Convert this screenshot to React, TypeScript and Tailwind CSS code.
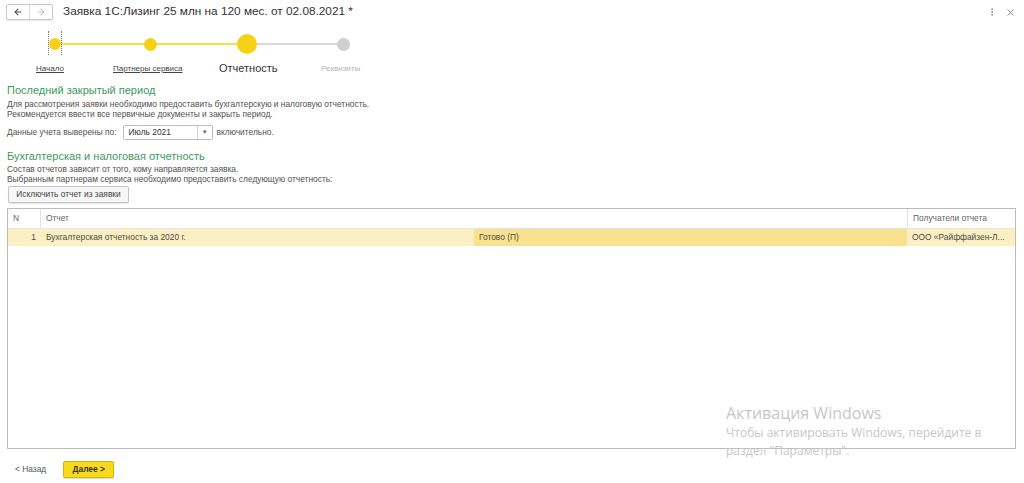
import { ArrowLeft, ArrowRight, X, MoreVertical } from 'lucide-react'

const font = { fontFamily: '"Liberation Sans", Arial, sans-serif' }

function Step({ label, state }: { label: string; state: 'done' | 'current' | 'next' }) {
  if (state === 'current') return <span className="text-[11px] text-[#333]">{label}</span>
  if (state === 'next') return <span className="text-[8px] text-[#b5b5b5]">{label}</span>
  return <span className="text-[8px] text-[#444] underline">{label}</span>
}

export default function App() {
  return (
    <div style={font} className="relative w-[1024px] h-[483px] bg-white overflow-hidden text-[#525252]">
      {/* header */}
      <div className="flex items-center h-[23px] pt-[1px] pl-[6px] pr-[8px]">
        <div className="flex h-[16px] border border-[#c8c8c8] rounded-[2px] shadow-[0_1px_1px_rgba(0,0,0,0.08)]">
          <div className="w-[23px] flex items-center justify-center border-r border-[#dcdcdc]">
            <ArrowLeft size={10} strokeWidth={2.5} className="text-[#444]" />
          </div>
          <div className="w-[22px] flex items-center justify-center">
            <ArrowRight size={10} strokeWidth={2.5} className="text-[#c4c4c4]" />
          </div>
        </div>
        <div className="ml-[10px] text-[11.8px] text-[#333]">Заявка 1С:Лизинг 25 млн на 120 мес. от 02.08.2021 *</div>
        <div className="ml-auto flex items-center gap-[8px] text-[#888]">
          <MoreVertical size={10} />
          <X size={11} />
        </div>
      </div>

      {/* stepper */}
      <div className="relative h-[59px] text-[8px] leading-none">
        <div className="absolute left-[55px] top-[20px] w-[192px] h-[2px] bg-[#f7dc4a]" />
        <div className="absolute left-[247px] top-[20px] w-[96px] h-[2px] bg-[#d8d8d8]" />
        <div className="absolute left-[48px] top-[8px] h-[24px] w-[14px] border-l border-r border-dotted border-[#777]" />
        <div className="absolute left-[49px] top-[15px] w-[12px] h-[12px] rounded-full bg-[#f7d117]" />
        <div className="absolute left-[144px] top-[15px] w-[13px] h-[13px] rounded-full bg-[#f7d117]" />
        <div className="absolute left-[237px] top-[11px] w-[20px] h-[20px] rounded-full bg-[#f7d117]" />
        <div className="absolute left-[337px] top-[15px] w-[13px] h-[13px] rounded-full bg-[#cfcfcf]" />
        <div className="absolute left-[36px] top-[42px]"><Step label="Начало" state="done" /></div>
        <div className="absolute left-[113px] top-[42px]"><Step label="Партнеры сервиса" state="done" /></div>
        <div className="absolute left-[219px] top-[40px]"><Step label="Отчетность" state="current" /></div>
        <div className="absolute left-[321px] top-[42px]"><Step label="Реквизиты" state="next" /></div>
      </div>

      <div className="px-[7px]">
        <div className="text-[11px] text-[#3d9a5e] leading-[14px] mt-[1px]">Последний закрытый период</div>
        <div className="text-[8.4px] leading-[10px] mt-[2px]">
          Для рассмотрения заявки необходимо предоставить бухгалтерскую и налоговую отчетность.
          <br />
          Рекомендуется ввести все первичные документы и закрыть период.
        </div>
        <div className="flex items-center mt-[6px] text-[8.4px]">
          <span>Данные учета выверены по:</span>
          <div className="ml-[6px] flex h-[15px] w-[90px] border border-[#bdbdbd] rounded-[2px]">
            <div className="flex-1 pl-[5px] flex items-center text-[#333]">Июль 2021</div>
            <div className="w-[15px] border-l border-[#d4d4d4] flex items-center justify-center text-[7px] text-[#666]">▾</div>
          </div>
          <span className="ml-[4px]">включительно.</span>
        </div>

        <div className="text-[11px] text-[#3d9a5e] leading-[14px] mt-[9px]">Бухгалтерская и налоговая отчетность</div>
        <div className="text-[8.4px] leading-[9.5px] mt-[2px]">
          Состав отчетов зависит от того, кому направляется заявка.
          <br />
          Выбранным партнерам сервиса необходимо предоставить следующую отчетность:
        </div>
        <button className="block mt-[2px] h-[17px] w-[121px] ml-[1px] border border-[#c3c3c3] rounded-[2px] bg-[#f7f7f7] text-[8.4px] leading-none text-[#444] shadow-[0_1px_1px_rgba(0,0,0,0.1)]">
          Исключить отчет из заявки
        </button>

        <div className="mt-[5px] h-[241px] w-[1009px] border border-[#bcbcbc] text-[8.4px] leading-none">
          <div className="flex h-[20px] items-center border-b border-[#e3e3e3] text-[#666]">
            <div className="w-[33px] h-full pl-[5px] flex items-center border-r border-[#e3e3e3]">N</div>
            <div className="flex-1 pl-[5px]">Отчет</div>
            <div className="w-[108px] h-full pl-[5px] flex items-center border-l border-[#e3e3e3]">Получатели отчета</div>
          </div>
          <div className="flex h-[17px] items-center bg-[#fcf0c2] text-[#4a4a4a]">
            <div className="w-[33px] pr-[5px] text-right">1</div>
            <div className="w-[433px] pl-[5px]">Бухгалтерская отчетность за 2020 г.</div>
            <div className="flex-1 h-full flex items-center pl-[5px] bg-[#f9e28f]">Готово (П)</div>
            <div className="w-[108px] pl-[5px] whitespace-nowrap overflow-hidden">ООО «Райффайзен-Л...</div>
          </div>
        </div>
      </div>

      <div className="flex items-center px-[15px] mt-[12px] text-[8.4px] leading-none">
        <span className="text-[#555]">&lt; Назад</span>
        <button className="ml-[17px] h-[17px] w-[51px] bg-[#f8d91e] border border-[#d8b600] rounded-[2px] text-[#333] font-bold shadow-[0_1px_1px_rgba(0,0,0,0.15)]">
          Далее &gt;
        </button>
      </div>

      <div className="absolute left-[726px] top-[403px] text-[#c7c7c7] pointer-events-none" style={{ fontFamily: '"Open Sans", "Noto Sans", sans-serif' }}>
        <div className="text-[16px] leading-[21px]">Активация Windows</div>
        <div className="text-[12px] leading-[18px]">Чтобы активировать Windows, перейдите в<br />раздел "Параметры".</div>
      </div>
    </div>
  )
}
